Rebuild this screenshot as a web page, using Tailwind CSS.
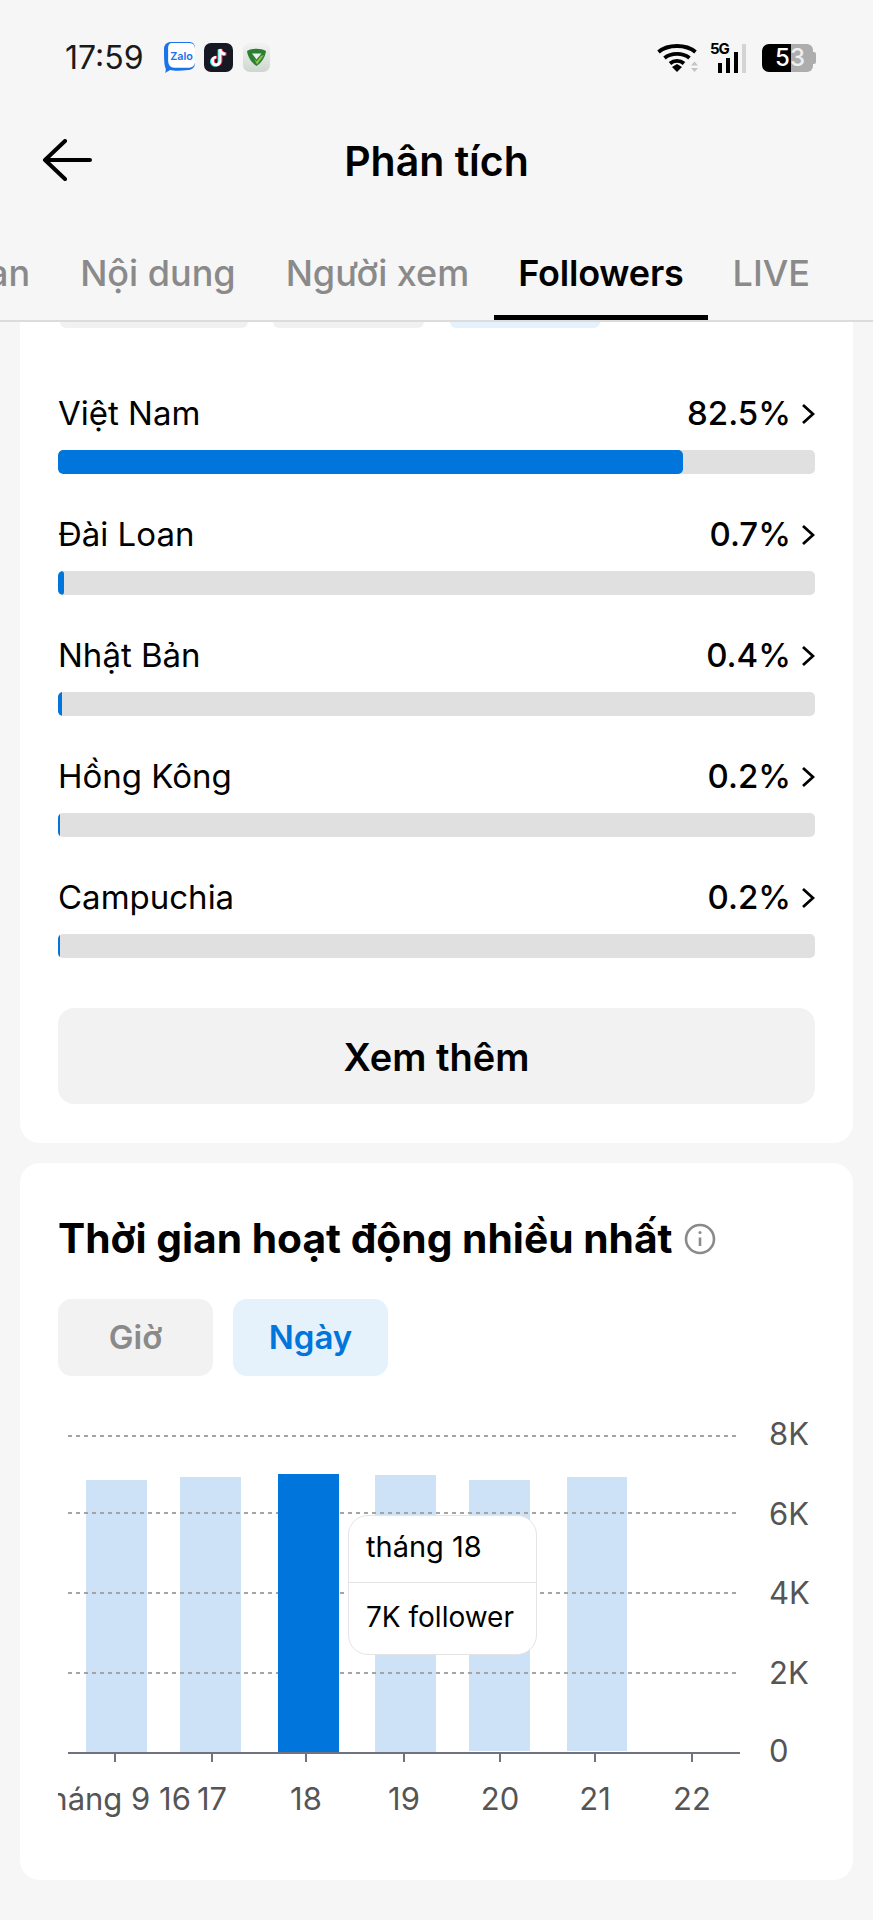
<!doctype html>
<html>
<head>
    <meta charset="UTF-8">
    <meta name="viewport" content="width=device-width, initial-scale=1.0">
    <script src="https://cdn.jsdelivr.net/npm/@tailwindcss/browser@4"></script>
    <title>Phân tích</title>
</head>

<body class="w-[873px] h-[1920px] overflow-hidden bg-[#f6f6f6] text-black font-['Inter',sans-serif]">

    <!-- Status bar -->
    <div class="h-[114px] flex items-start justify-between pl-[65px] pr-[57px] pt-[43px]">
        <div class="flex items-center gap-[9px] h-[29px]">
            <span class="text-[32px] text-[#1a1a1a] mr-[11px]">17:59</span>
            <svg class="w-[31px] h-[31px]" viewBox="0 0 30 30">
                <path d="M7 0H24C28 0 30 2 30 6V20C30 25 27 27 23 27C17 28 9 28 6 27L1 30C2 28 2 26 1 24C0 20 0 12 0 7C0 2 3 0 7 0Z" fill="#1a73e8"/>
                <path d="M8 1H24C28 1 30 3 30 7V19C30 23 27 25 23 25H10C6 25 4 22 4 18V6C4 3 5 1 8 1Z" fill="#fff"/>
                <text x="17" y="17" text-anchor="middle" font-size="10.500" font-weight="600" fill="#1a73e8">Zalo</text>
            </svg>
            <svg class="w-[29px] h-[29px]" viewBox="0 0 29 29">
                <rect width="29" height="29" rx="7" fill="#161823"/>
                <path d="M16 6V18A3.800 3.800 0 1 1 12.200 14.200M16 6C16.500 9.500 18.500 11 21.500 11" fill="none" stroke="#25f4ee" stroke-width="2.800" transform="translate(-1 0.500)"/>
                <path d="M16 6V18A3.800 3.800 0 1 1 12.200 14.200M16 6C16.500 9.500 18.500 11 21.500 11" fill="none" stroke="#fe2c55" stroke-width="2.800" transform="translate(1 0)"/>
                <path d="M16 6V18A3.800 3.800 0 1 1 12.200 14.200M16 6C16.500 9.500 18.500 11 21.500 11" fill="none" stroke="#fff" stroke-width="2.800"/>
            </svg>
            <svg class="w-[27px] h-[29px] ml-[1px]" viewBox="0 0 27 29">
                <defs>
                    <linearGradient id="shieldbg" x1="0" y1="0" x2="0" y2="1">
                        <stop offset="0" stop-color="#f2f4f1"/>
                        <stop offset="1" stop-color="#cfd6cf"/>
                    </linearGradient>
                </defs>
                <rect width="27" height="29" rx="7" fill="url(#shieldbg)"/>
                <path d="M4 8C9 5 18 5 23 8C22 15 18 20 13.500 23C9 20 5 15 4 8Z" fill="#2b7f35"/>
                <path d="M9 10.500H18.500L13.500 16.500Z" fill="#e8efe6"/>
                <path d="M11 15.500L13.500 18.500L18 13L21 12L14 21.500Z" fill="#8cc63f"/>
            </svg>
        </div>
        <div class="flex items-center h-[29px]">
            <svg class="w-[42px] h-[30px]" viewBox="0 0 42 30">
                <path d="M1.500 9C11 1 29 1 38.500 9" fill="none" stroke="#000" stroke-width="3.800"/>
                <path d="M7.500 15C14 9.500 26 9.500 32.500 15" fill="none" stroke="#000" stroke-width="3.800"/>
                <path d="M13 20.500C17 17 23 17 27 20.500" fill="none" stroke="#000" stroke-width="3.800"/>
                <path d="M15 24L20 21L25 24L20 29Z" fill="#000"/>
                <path d="M34 22.500L37.500 18.500L41 22.500ZM34 25L41 25L37.500 29Z" fill="#c4c4c4"/>
            </svg>
            <div class="relative w-[40px] h-[30px] ml-[11px]">
                <span class="absolute left-0 top-[-2px] text-[15px] leading-[16px] font-bold tracking-[-1px]">5G</span>
                <div class="absolute left-[8px] bottom-0 flex items-end gap-[4px]">
                    <div class="w-[4px] h-[10px] bg-black"></div>
                    <div class="w-[4px] h-[15px] bg-black"></div>
                    <div class="w-[4px] h-[21px] bg-black"></div>
                    <div class="w-[4px] h-[29px] bg-[#d4d4d4]"></div>
                </div>
            </div>
            <div class="relative flex w-[54px] h-[28px] ml-[12px] rounded-[7px] overflow-hidden">
                <div class="w-[29px] bg-black"></div>
                <div class="w-[22px] bg-[#adadad] rounded-r-[6px]"></div>
                <div class="w-[3px] h-[12px] my-auto bg-[#adadad] rounded-r-[2px]"></div>
                <span class="absolute left-[13px] top-0 text-[24px] leading-[28px] font-medium text-white">5</span>
                <span class="absolute left-[28px] top-0 text-[24px] leading-[28px] font-medium text-[#f0f0f0]">3</span>
            </div>
        </div>
    </div>

    <!-- Title -->
    <div class="relative h-[96px] flex items-center justify-center">
        <svg class="absolute left-[42px] top-[25px] w-[52px] h-[42px]" viewBox="0 0 52 42" fill="none" stroke="#000" stroke-width="4" stroke-linecap="round" stroke-linejoin="round">
            <path d="M23 2L3 21L23 40M4 21H48"/>
        </svg>
        <h1 class="text-[41px] font-semibold">Phân tích</h1>
    </div>

    <!-- Tabs -->
    <div class="relative z-10 h-[112px] flex justify-end pr-[38px] overflow-hidden bg-[#f6f6f6] border-b-2 border-[#dcdcdc] text-[36px] font-medium text-[#8a8a8a]">
        <div class="shrink-0 px-[25px] pt-[36px]">Tổng quan</div>
        <div class="shrink-0 px-[25px] pt-[36px]">Nội dung</div>
        <div class="shrink-0 px-[25px] pt-[36px]">Người xem</div>
        <div class="shrink-0 px-[24px] pt-[36px] text-black font-semibold tracking-[-0.2px] border-b-[5px] border-black">Followers</div>
        <div class="shrink-0 px-[25px] pt-[36px]">LIVE</div>
    </div>

    <!-- Quoc gia -->
    <div class="mx-[20px] bg-white rounded-b-[20px] px-[38px] pb-[39px]">
        <div class="flex h-[6px] pl-[2px]">
            <div class="w-[188px] rounded-b-[12px] bg-[#f1f1f1]"></div>
            <div class="w-[151px] ml-[25px] rounded-b-[12px] bg-[#f1f1f1]"></div>
            <div class="w-[150px] ml-[26px] rounded-b-[12px] bg-[#e5f1fb]"></div>
        </div>

        <div class="flex flex-col gap-[39px] pt-[64px]">
            <div>
                <div class="flex justify-between items-center h-[44px] mb-[14px]">
                    <span class="text-[33px]">Việt Nam</span>
                    <span class="flex items-center text-[33px] font-medium">82.5%
                        <svg class="w-[14px] h-[22px] ml-[10px]" viewBox="0 0 14 22" fill="none" stroke="#000" stroke-width="2.800"><path d="M2 2L12 11L2 20"/></svg>
                    </span>
                </div>
                <div class="h-[24px] rounded-[5px] bg-[#e0e0e0] overflow-hidden">
                    <div class="h-full rounded-[5px] bg-[#0075db]" style="width: 82.5%"></div>
                </div>
            </div>
            <div>
                <div class="flex justify-between items-center h-[44px] mb-[14px]">
                    <span class="text-[33px]">Đài Loan</span>
                    <span class="flex items-center text-[33px] font-medium">0.7%
                        <svg class="w-[14px] h-[22px] ml-[10px]" viewBox="0 0 14 22" fill="none" stroke="#000" stroke-width="2.800"><path d="M2 2L12 11L2 20"/></svg>
                    </span>
                </div>
                <div class="h-[24px] rounded-[5px] bg-[#e0e0e0] overflow-hidden">
                    <div class="h-full rounded-[5px] bg-[#0075db]" style="width: 0.8%"></div>
                </div>
            </div>
            <div>
                <div class="flex justify-between items-center h-[44px] mb-[14px]">
                    <span class="text-[33px]">Nhật Bản</span>
                    <span class="flex items-center text-[33px] font-medium">0.4%
                        <svg class="w-[14px] h-[22px] ml-[10px]" viewBox="0 0 14 22" fill="none" stroke="#000" stroke-width="2.800"><path d="M2 2L12 11L2 20"/></svg>
                    </span>
                </div>
                <div class="h-[24px] rounded-[5px] bg-[#e0e0e0] overflow-hidden">
                    <div class="h-full bg-[#0075db]" style="width: 0.5%"></div>
                </div>
            </div>
            <div>
                <div class="flex justify-between items-center h-[44px] mb-[14px]">
                    <span class="text-[33px]">Hồng Kông</span>
                    <span class="flex items-center text-[33px] font-medium">0.2%
                        <svg class="w-[14px] h-[22px] ml-[10px]" viewBox="0 0 14 22" fill="none" stroke="#000" stroke-width="2.800"><path d="M2 2L12 11L2 20"/></svg>
                    </span>
                </div>
                <div class="h-[24px] rounded-[5px] bg-[#e0e0e0] overflow-hidden">
                    <div class="h-full bg-[#0075db]" style="width: 0.25%"></div>
                </div>
            </div>
            <div>
                <div class="flex justify-between items-center h-[44px] mb-[14px]">
                    <span class="text-[33px]">Campuchia</span>
                    <span class="flex items-center text-[33px] font-medium">0.2%
                        <svg class="w-[14px] h-[22px] ml-[10px]" viewBox="0 0 14 22" fill="none" stroke="#000" stroke-width="2.800"><path d="M2 2L12 11L2 20"/></svg>
                    </span>
                </div>
                <div class="h-[24px] rounded-[5px] bg-[#e0e0e0] overflow-hidden">
                    <div class="h-full bg-[#0075db]" style="width: 0.25%"></div>
                </div>
            </div>
        </div>

        <button class="w-full h-[96px] mt-[50px] pt-[3px] rounded-[16px] bg-[#f2f2f2] text-[38px] font-semibold">Xem thêm</button>
    </div>

    <!-- Thoi gian hoat dong -->
    <div class="mx-[20px] mt-[20px] h-[717px] bg-white rounded-[20px] px-[38px] pt-[49px]">
        <div class="flex items-center h-[54px]">
            <h2 class="text-[40.75px] font-bold">Thời gian hoạt động nhiều nhất</h2>
            <svg class="w-[32px] h-[32px] ml-[11px]" viewBox="0 0 32 32" fill="none" stroke="#8a8a8a">
                <circle cx="16" cy="16" r="14" stroke-width="2.600"/>
                <path d="M16 14.500V23" stroke-width="2.600"/>
                <circle cx="16" cy="9.500" r="1.500" fill="#8a8a8a" stroke="none"/>
            </svg>
        </div>
        <div class="flex gap-[20px] mt-[33px]">
            <div class="w-[155px] h-[77px] flex items-center justify-center rounded-[14px] bg-[#f2f2f2] text-[33px] font-semibold text-[#8a8a8a]">Giờ</div>
            <div class="w-[155px] h-[77px] flex items-center justify-center rounded-[14px] bg-[#e5f1fb] text-[33px] font-semibold text-[#0075db]">Ngày</div>
        </div>

        <!-- chart -->
        <div class="relative w-[775px] h-[410px] mt-[44px]">
            <svg class="w-[775px] h-[410px]" viewBox="0 0 775 410" font-size="31">
                <g fill="#cde2f7">
                    <rect x="28" y="60" width="61" height="273"/>
                    <rect x="122" y="57" width="61" height="276"/>
                    <rect x="317" y="55" width="61" height="278"/>
                    <rect x="411" y="60" width="61" height="271"/>
                    <rect x="509" y="57" width="60" height="274"/>
                </g>
                <path d="M10 16H682M10 93H682M10 173H682M10 253H682" stroke="#a4a4a4" stroke-width="2" stroke-dasharray="4 4"/>
                <rect x="220" y="54" width="61" height="279" fill="#0075db"/>
                <path d="M10 333H682" stroke="#6f7280" stroke-width="2"/>
                <path d="M57 333V342M154 333V342M248 333V342M346 333V342M442 333V342M537 333V342M634 333V342" stroke="#6f7280" stroke-width="2"/>
                <g fill="#555555" text-anchor="middle">
                    <text x="57" y="390">tháng 9 16</text>
                    <text x="154" y="390">17</text>
                    <text x="248" y="390">18</text>
                    <text x="346" y="390">19</text>
                    <text x="442" y="390">20</text>
                    <text x="537" y="390">21</text>
                    <text x="634" y="390">22</text>
                </g>
                <g fill="#555555">
                    <text x="711" y="25">8K</text>
                    <text x="711" y="105">6K</text>
                    <text x="711" y="184">4K</text>
                    <text x="711" y="264">2K</text>
                    <text x="711" y="342">0</text>
                </g>
            </svg>
            <div class="absolute left-[290px] top-[95px] w-[189px] h-[140px] rounded-[20px] bg-white border border-[#e4e4e4] text-[28px]">
                <div class="h-[67px] flex items-center pl-[17px] pb-[4px] text-[29px] border-b border-[#e4e4e4]">tháng 18</div>
                <div class="h-[71px] flex items-center pl-[17px] pb-[4px]">7K follower</div>
            </div>
        </div>
    </div>

</body>
</html>
